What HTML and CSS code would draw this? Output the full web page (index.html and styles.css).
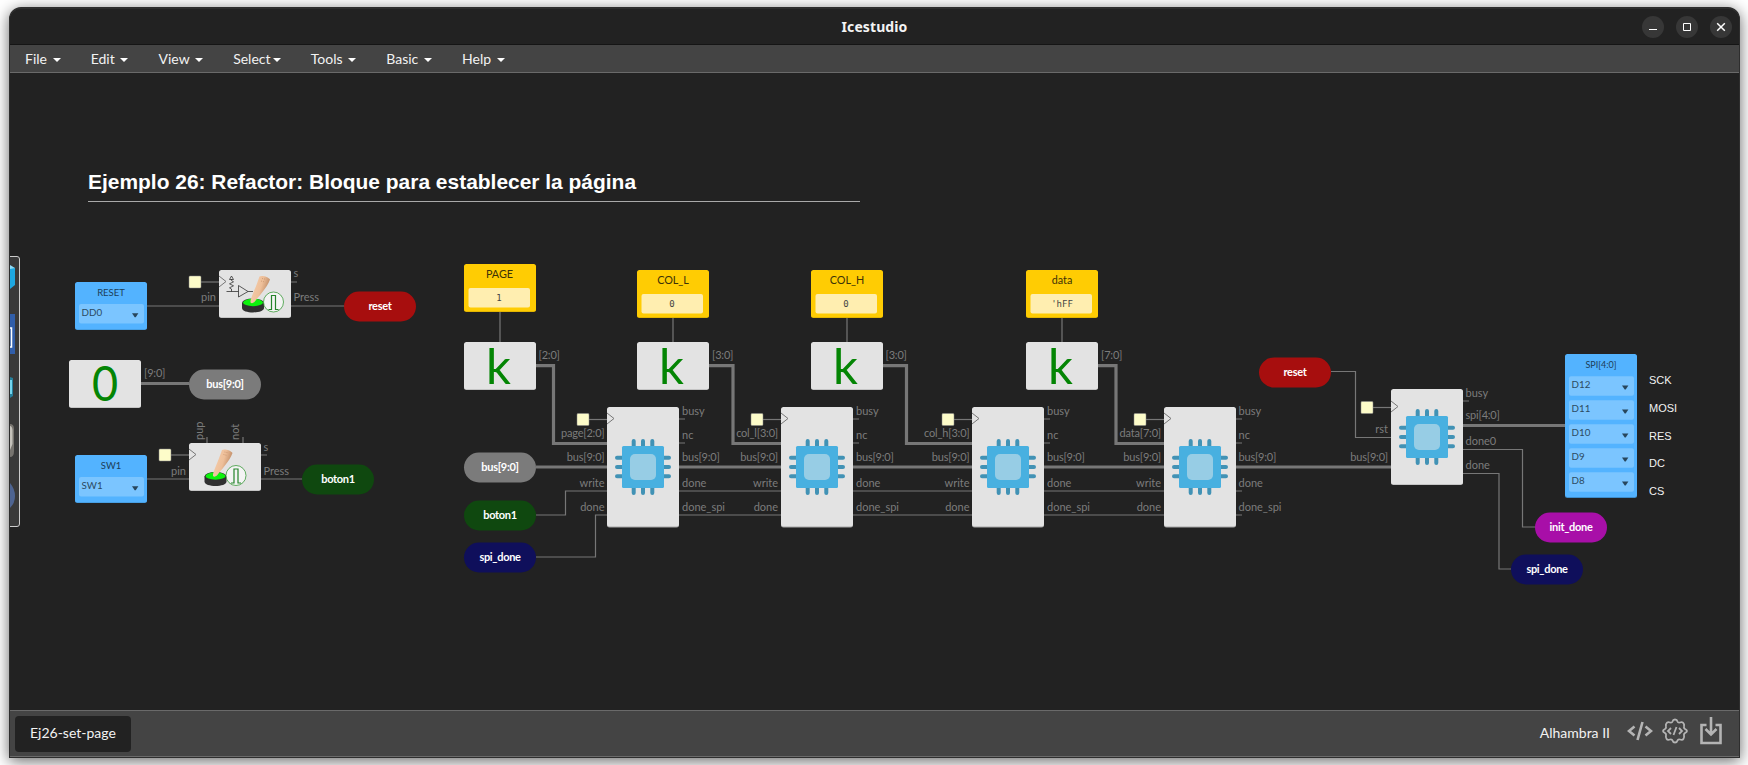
FILE: index.html
```html
<!DOCTYPE html>
<html lang="es">
<head>
<meta charset="utf-8">
<title>Icestudio</title>
<link rel="stylesheet" href="styles.css">
</head>
<body>
<div class="window">
  <header class="titlebar">
    <h1 class="title">Icestudio</h1>
    <div class="controls">
      <button class="control" aria-label="Minimize"><svg width="22" height="22"><path d="M7 13.5h8"/></svg></button>
      <button class="control" aria-label="Maximize"><svg width="22" height="22"><path d="M7.5 7.5h7v7h-7z"/></svg></button>
      <button class="control" aria-label="Close"><svg width="22" height="22"><path class="cross" d="M7.2 7.2l7.6 7.6M14.8 7.2l-7.6 7.6"/></svg></button>
    </div>
  </header>
  <nav class="menubar">
    <a class="menu">File <i class="caret"></i></a>
    <a class="menu">Edit <i class="caret"></i></a>
    <a class="menu">View <i class="caret"></i></a>
    <a class="menu">Select<i class="caret"></i></a>
    <a class="menu">Tools <i class="caret"></i></a>
    <a class="menu">Basic <i class="caret"></i></a>
    <a class="menu">Help <i class="caret"></i></a>
  </nav>
  <main class="canvas">
    <svg class="diagram" viewBox="9 73 1730 637" width="1730" height="637">
      <defs>
        <g id="clock">
          <path class="wire" d="M-18 0H0"/>
          <rect class="clock-box" x="-30" y="-6" width="12" height="12" rx="1"/>
        </g>
        <path id="edge" class="edge" d="M0 -6L7 -.5L0 5"/>
        <g id="chip">
          <path class="pins" d="M-9.3 -26V26M0 -26V26M9.3 -26V26M-26 -9.3H26M-26 0H26M-26 9.3H26"/>
          <rect class="chip-body" x="-21" y="-21" width="42" height="42" rx="1.5"/>
          <rect class="chip-core" x="-13" y="-13" width="26" height="26" rx="5"/>
        </g>
        <g id="block"><rect class="shade" y="1" width="72" height="119.500" rx="2.5"/><rect class="block" width="72" height="119.5" rx="2.5"/><use href="#edge" y="12"/><use href="#chip" x="36" y="60"/></g>
        <linearGradient id="skin" x1="0" x2="1" y1="0" y2=".4">
          <stop offset="0" stop-color="#f6cfae"/><stop offset=".6" stop-color="#eebf99"/><stop offset="1" stop-color="#b98560"/>
        </linearGradient>
        <g id="press">
          <path fill="#303030" d="M-11 0v5c0 6 22 6 22 0v-5z"/>
          <ellipse cx="0" cy="0" rx="11" ry="4.6" fill="#303030"/>
          <ellipse cx="0" cy="-.5" rx="10" ry="3.7" fill="#0df20d"/>
          <path class="finger" d="M-2.5 -.5C-3 -4 2 -13 6.500 -26.500C9 -28 15.500 -26 17 -23.500C14 -15 5 -6 1.500 -1Q-1 1 -2.500 -.5z"/>
          <path d="M9 -24.500l4 .8M8 -22l3 .8" stroke="#b98560" stroke-width=".6" stroke-dasharray="1 1"/>
          <circle class="pulse-ring" cx="20.500" cy="-1" r="10"/>
          <path class="pulse" d="M15.500 6.500H18.500V-7.500H22.500V6.500H25.500"/>
        </g>
        <g id="pin"><rect class="pin-shade" y="1" width="72" height="47" rx="2.5"/><rect class="pin" width="72" height="47.500" rx="2.5"/></g>
        <g id="select"><rect class="select" width="65" height="19.500" rx="2"/><path class="arrow" d="M53 9.300h6.400l-2.700 4h-1z"/></g>
        <g id="const"><rect class="const-shade" y="1" width="72" height="47" rx="2.5"/><rect class="const" width="72" height="47.500" rx="2.5"/><rect class="const-value" x="4.500" y="24" width="61.500" height="19.500" rx="2"/></g>
        <g id="small"><rect class="shade" y="1" width="72" height="47" rx="2.5"/><rect class="block" width="72" height="47.500" rx="2.5"/></g>
        <rect id="label" width="72" height="30" rx="15"/>
      </defs>

      <!-- notes -->
      <text class="heading" x="88" y="189">Ejemplo 26: Refactor: Bloque para establecer la página</text>
      <path class="rule" d="M88 201.500H860"/>

      <!-- toolbox edge -->
      <g>
        <path class="toolbox" d="M9 256.500H17Q19.500 256.500 19.500 259V524Q19.500 526.500 17 526.500H9"/>
        <path fill="#8fdcf8" d="M10 265l5 3v3l-5-1z"/><path fill="#1ea7e0" d="M10 269l5-1v17l-5 4z"/>
        <path fill="#315ea9" d="M10 314h5v40h-5z"/><path fill="none" stroke="#fff" stroke-width="1.500" d="M10 328h1.500v19H10"/>
        <path fill="#27809c" d="M10 377l3 1v18l-3 2z"/><path fill="#74d5ee" d="M10 380h2v14h-2z"/>
        <path fill="#77746f" d="M10 424q4 0 4 5v22q0 6-4 6z"/><path fill="#c4c1ba" d="M10 426q2 0 2.500 4v14l-2.500 6z"/>
        <path fill="#4e6491" d="M10 483q5 6 5 13t-5 12z"/>
      </g>

      <!-- wires -->
      <g class="wire">
        <path d="M147 306H219M291 306H344M291 282H297M147 479H189M261 479H302M261 455H267M207 437V443M243 437V443"/>
        <path d="M500 312V342M673 318V342M847 318V342M1062 318V342"/>
        <path d="M536 515H565.500V491H607M536 557H595.500V515H607"/>
        <path d="M679 419H685M679 443H685M853 419H859M853 443H859M1044 419H1050M1044 443H1050M1236 419H1242M1236 443H1242M1236 491H1242M1236 515H1242"/>
        <path d="M679 491H781M679 515H781M853 491H972M853 515H972M1044 491H1164M1044 515H1164"/>
        <path d="M1331 371.500H1355.500V437.500H1391M1463 401H1469M1463 449.500H1522.500V527H1535M1463 473.500H1499V569H1511"/>
      </g>
      <g class="bus">
        <path d="M141 383.500H189M536 365.700H553.500V443.500H607M709 365.700H733V443.500H781M883 365.700H906.500V443.500H972M1098 365.700H1116V443.500H1164"/>
        <path d="M536 467H607M679 467H781M853 467H972M1044 467H1164M1236 467H1391M1463 425.500H1565"/>
      </g>

      <!-- clocks -->
      <use href="#clock" x="219" y="282"/><use href="#clock" x="189" y="455"/>
      <use href="#clock" x="607" y="419.500"/><use href="#clock" x="781" y="419.500"/><use href="#clock" x="972" y="419.500"/><use href="#clock" x="1164" y="419.500"/><use href="#clock" x="1391" y="407.500"/>

      <!-- inputs -->
      <use href="#pin" x="75" y="282"/><use href="#select" x="79" y="304"/>
      <text class="pin-name" x="111" y="296">RESET</text><text class="pin-value" x="81.500" y="316">DD0</text>
      <use href="#pin" x="75" y="455"/><use href="#select" x="79" y="477"/>
      <text class="pin-name" x="111" y="469">SW1</text><text class="pin-value" x="81.500" y="489">SW1</text>

      <!-- buttons -->
      <use href="#small" x="219" y="270"/><use href="#edge" x="219" y="282"/><use href="#press" x="253" y="303"/>
      <path class="pullup" d="M226.500 291.500H238.500M248 291.500H253M231.500 291.500V289l-2-1.200 4-2-4-2 4-2-2-1.300V279M229.500 279.500l2-3.500 2 3.500zM238.500 285.500V297L248 291.500z"/>
      <use href="#small" x="189" y="443"/><use href="#edge" x="189" y="455"/><use href="#press" x="215.500" y="476.500"/>

      <!-- constants -->
      <use href="#small" x="69" y="360"/><text class="symbol" transform="translate(105 401) scale(.92 1)">0</text>
      <use href="#const" x="464" y="264"/><use href="#const" x="637" y="270"/><use href="#const" x="811" y="270"/><use href="#const" x="1026" y="270"/>
      <g class="const-name"><text x="499.500" y="278">PAGE</text><text x="673" y="284">COL_L</text><text x="847" y="284">COL_H</text><text x="1062" y="284">data</text></g>
      <g class="const-text"><text x="499" y="301">1</text><text x="672" y="307">0</text><text x="846" y="307">0</text><text x="1062" y="307">'hFF</text></g>
      <use href="#small" x="464" y="342"/><use href="#small" x="637" y="342"/><use href="#small" x="811" y="342"/><use href="#small" x="1026" y="342"/>
      <g class="symbol"><text x="498.500" y="383.500">k</text><text x="671.500" y="383.500">k</text><text x="845.500" y="383.500">k</text><text x="1060.500" y="383.500">k</text></g>

      <!-- blocks -->
      <use href="#block" x="607" y="407"/><use href="#block" x="781" y="407"/><use href="#block" x="972" y="407"/><use href="#block" x="1164" y="407"/>
      <rect class="shade" x="1391" y="390" width="72" height="95" rx="2.500"/><rect class="block" x="1391" y="389" width="72" height="95.500" rx="2.500"/>
      <use href="#edge" x="1391" y="407"/><use href="#chip" x="1427" y="437"/>

      <!-- port names -->
      <g class="port">
        <text x="293.500" y="277">s</text><text x="293.500" y="301">Press</text><text x="263.500" y="450.500">s</text><text x="263.500" y="475">Press</text>
        <text x="682" y="415">busy</text><text x="682" y="439">nc</text><text x="682" y="487">done</text><text x="682" y="511">done_spi</text>
        <text x="856" y="415">busy</text><text x="856" y="439">nc</text><text x="856" y="487">done</text><text x="856" y="511">done_spi</text>
        <text x="1047" y="415">busy</text><text x="1047" y="439">nc</text><text x="1047" y="487">done</text><text x="1047" y="511">done_spi</text>
        <text x="1238.500" y="415">busy</text><text x="1238.500" y="439">nc</text><text x="1238.500" y="487">done</text><text x="1238.500" y="511">done_spi</text>
        <text x="1465.500" y="397">busy</text><text x="1465.500" y="445">done0</text><text x="1465.500" y="469">done</text>
        <text transform="translate(202.500 440) rotate(-90)">pup</text><text transform="translate(238.500 440) rotate(-90)">not</text>
      </g>
      <g class="port range">
        <text x="144" y="377">[9:0]</text><text x="538.500" y="359">[2:0]</text><text x="712" y="359">[3:0]</text><text x="885.500" y="359">[3:0]</text><text x="1101" y="359">[7:0]</text>
        <text x="682" y="461">bus[9:0]</text><text x="856" y="461">bus[9:0]</text><text x="1047" y="461">bus[9:0]</text><text x="1238.500" y="461">bus[9:0]</text><text x="1465.500" y="419">spi[4:0]</text>
      </g>
      <g class="port left">
        <text x="216" y="301">pin</text><text x="186" y="475">pin</text>
        <text x="604.500" y="487">write</text><text x="604.500" y="511">done</text>
        <text x="778" y="487">write</text><text x="778" y="511">done</text>
        <text x="969.500" y="487">write</text><text x="969.500" y="511">done</text>
        <text x="1161" y="487">write</text><text x="1161" y="511">done</text>
        <text x="1388" y="433">rst</text>
      </g>
      <g class="port left range">
        <text x="604.500" y="437">page[2:0]</text><text x="604.500" y="461">bus[9:0]</text>
        <text x="778" y="437">col_l[3:0]</text><text x="778" y="461">bus[9:0]</text>
        <text x="969.500" y="437">col_h[3:0]</text><text x="969.500" y="461">bus[9:0]</text>
        <text x="1161" y="437">data[7:0]</text><text x="1161" y="461">bus[9:0]</text>
        <text x="1388" y="461">bus[9:0]</text>
      </g>

      <!-- wire labels -->
      <g class="red"><use href="#label" x="344" y="291.500"/><use href="#label" x="1259" y="357.500"/></g>
      <g class="gray"><use href="#label" x="189" y="369.500"/><use href="#label" x="464" y="452.500"/></g>
      <g class="green"><use href="#label" x="302" y="464.500"/><use href="#label" x="464" y="500.500"/></g>
      <g class="navy"><use href="#label" x="464" y="542.500"/><use href="#label" x="1511" y="554.500"/></g>
      <g class="purple"><use href="#label" x="1535" y="512.500"/></g>
      <g class="label-text">
        <text x="380" y="310">reset</text><text x="1295" y="376">reset</text>
        <text x="225" y="388">bus[9:0]</text><text x="500" y="471">bus[9:0]</text>
        <text x="338" y="483">boton1</text><text x="500" y="519">boton1</text>
        <text x="500" y="561">spi_done</text><text x="1547" y="573">spi_done</text><text x="1571" y="531">init_done</text>
      </g>

      <!-- SPI output -->
      <rect class="pin-shade" x="1565" y="355" width="72" height="143" rx="2.500"/><rect class="pin" x="1565" y="354" width="72" height="143" rx="2.500"/>
      <use href="#select" x="1569" y="376.300"/><use href="#select" x="1569" y="400.300"/><use href="#select" x="1569" y="424.300"/><use href="#select" x="1569" y="448.300"/><use href="#select" x="1569" y="472.300"/>
      <text class="pin-name tight" x="1601" y="368">SPI[4:0]</text>
      <g class="pin-value"><text x="1571.500" y="388">D12</text><text x="1571.500" y="412">D11</text><text x="1571.500" y="436">D10</text><text x="1571.500" y="460">D9</text><text x="1571.500" y="484">D8</text></g>
      <g class="note"><text x="1649" y="384">SCK</text><text x="1649" y="412">MOSI</text><text x="1649" y="440">RES</text><text x="1649" y="467">DC</text><text x="1649" y="495">CS</text></g>
    </svg>
  </main>
  <footer class="footer">
    <span class="tab">Ej26-set-page</span>
    <div class="status">
      <span class="board">Alhambra II</span>
      <svg class="tool code" width="26" height="20" viewBox="0 0 26 20"><path d="M7.500 5.500L2 10l5.500 4.500M18.500 5.500l5.500 4.500-5.500 4.500M15.500 1L10.500 19"/></svg>
      <svg class="tool gear" width="26" height="26" viewBox="0 0 26 26"><path d="M10.500 3.500Q11 1.500 13 1.500T15.500 3.500Q16 5 18 4.500Q20.500 3.500 21.500 5.200Q22.500 6.500 22 8.500Q21.500 10 23 11Q25 12 25 13T23 15Q21.500 16 22 17.500Q22.500 19.500 21.500 20.800Q20.500 22.500 18 21.500Q16 21 15.500 22.500Q15 24.500 13 24.500T10.500 22.500Q10 21 8 21.500Q5.500 22.500 4.500 20.800Q3.500 19.500 4 17.500Q4.500 16 3 15Q1 14 1 13T3 11Q4.500 10 4 8.500Q3.500 6.500 4.500 5.200Q5.500 3.500 8 4.500Q10 5 10.500 3.500z"/><path d="M9 10l-3 3 3 3M17 10l3 3-3 3M14.500 9l-3 8"/></svg>
      <svg class="tool load" width="22" height="28" viewBox="0 0 22 28"><path d="M6.500 8H1.500V26H20.500V8H15.500M11 0V17M5.500 12L11 17.500L16.500 12"/></svg>
    </div>
  </footer>
</div>
</body>
</html>
```

FILE: styles.css
```css
* { box-sizing: border-box; }
body {
  margin: 0;
  height: 765px;
  padding: 7px 8px 7px 9px;
  background: #fff;
  font-family: Lato, "Liberation Sans", sans-serif;
  overflow: hidden;
}
.window {
  display: flex;
  flex-direction: column;
  width: 1731px;
  height: 751px;
  background: #222;
  border: solid #2e2e2e;
  border-width: 2px 1px 1px;
  border-radius: 12px 12px 0 0;
  box-shadow: 0 3px 15px rgba(0, 0, 0, .6);
  overflow: hidden;
}
.titlebar {
  flex: none;
  display: grid;
  grid-template-columns: 1fr auto 1fr;
  align-items: center;
  height: 36px;
  padding: 0 7px;
  border-bottom: 1px solid #151515;
}
.title {
  grid-column: 2;
  margin: 0;
  color: #f4f4f4;
  font: bold 14px/20px "Noto Sans", sans-serif;
  letter-spacing: .1px;
}
.controls { display: flex; gap: 12px; justify-content: flex-end; }
.control {
  width: 22px;
  height: 22px;
  padding: 0;
  border: 0;
  border-radius: 50%;
  background: #373737;
}
.control svg { display: block; fill: none; stroke: #fff; stroke-width: 1; }
.control .cross { stroke-width: 1.5; }
.menubar {
  flex: none;
  display: flex;
  height: 28px;
  background: #444;
  border-bottom: 1px solid #6a6a6a;
}
.menu {
  padding: 0 15px;
  color: #f2f2f2;
  font-size: 14px;
  line-height: 28px;
  white-space: pre;
}
.menu + .menu { padding-left: 15.2px; }
.caret {
  display: inline-block;
  margin-left: 2px;
  border: solid transparent;
  border-width: 4px 4px 0;
  border-top-color: #fff;
  vertical-align: middle;
}
.canvas { flex: none; height: 637px; overflow: hidden; }
.diagram { display: block; margin-left: -1px; }
.footer {
  flex: 1;
  display: flex;
  align-items: center;
  justify-content: space-between;
  padding: 0 17px 0 5px;
  background: #444;
  border: solid #6a6a6a;
  border-width: 1px 0;
}
.tab {
  width: 116px;
  height: 36px;
  border-radius: 4px;
  background: #222;
  color: #f2f2f2;
  font-size: 14px;
  line-height: 34px;
  padding-left: 15px;
}
.status { display: flex; align-items: center; }
.board { margin: -2px 17px 0 0; color: #f2f2f2; font-size: 14px; }
.tool { fill: none; stroke: #b4b4b4; stroke-width: 2.6; }
.code { margin-top: -6px; }
.gear { margin: -5px 12px 0 9px; stroke-width: 1.8; }
.load { margin-top: -6px; }

.wire { fill: none; stroke: #777; stroke-width: 1.2; }
.bus { fill: none; stroke: #777; stroke-width: 3.2; }
.clock-box { fill: #fdfcc9; stroke: #888; stroke-width: .5; }
.edge { fill: none; stroke: #777; stroke-width: 1; }
.block { fill: #e3e3e3; }
.shade { fill: #a5a5a5; }
.pins { stroke: #4192b5; stroke-width: 4; stroke-linecap: round; }
.chip-body { fill: #48b0e0; }
.chip-core { fill: #97cde5; }
.finger { fill: url(#skin); }
.pulse-ring { fill: #f4f4f4; stroke: #3b9b3b; stroke-width: .8; }
.pulse { fill: none; stroke: #24842a; stroke-width: 1.2; }
.pullup { fill: none; stroke: #333; stroke-width: .8; }
.pin { fill: #53b3ff; }
.pin-shade { fill: #3f8cc9; }
.select { fill: #7bc5ff; }
.arrow { fill: #28465c; }
.pin-name { fill: #1d3e58; font-size: 9.5px; text-anchor: middle; }
.tight { font-size: 9px; }
.pin-value { fill: #2c4b62; font-size: 9.8px; }
.const { fill: #ffcc03; }
.const-shade { fill: #c8a103; }
.const-value { fill: #ffeeb0; }
.const-name { fill: #3c3208; font-size: 10.8px; text-anchor: middle; }
.const-text { fill: #444; font: 9px "DejaVu Sans Mono", monospace; text-anchor: middle; }
.symbol { fill: #048504; font-size: 49px; text-anchor: middle; }
.port { fill: #7c7c7c; font-size: 11px; }
.range { letter-spacing: -.2px; }
.left { text-anchor: end; }
.label-text { fill: #fff; font-size: 11px; font-weight: bold; letter-spacing: -.3px; text-anchor: middle; }
.red { fill: #a70e0e; }
.gray { fill: #7b7b7b; }
.green { fill: #0f480f; }
.navy { fill: #0f0f5b; }
.purple { fill: #a80fa8; }
.heading { fill: #fff; font: bold 20.94px "Liberation Sans", sans-serif; }
.rule { stroke: #aaa; stroke-width: 1; }
.note { fill: #f2f2f2; font: 11px "Liberation Sans", sans-serif; }
.toolbox { fill: #393939; stroke: #ccc; stroke-width: 1; }
```
